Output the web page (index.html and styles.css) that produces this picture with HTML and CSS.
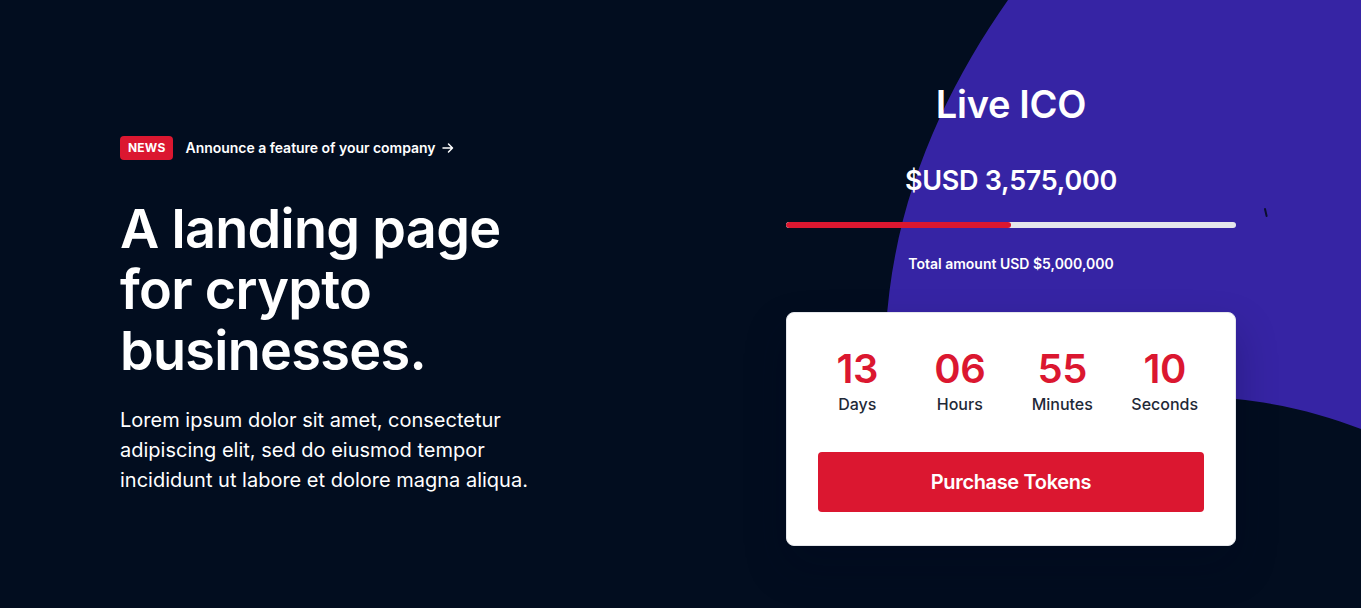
FILE: index.html
```html
<!DOCTYPE html>
<html lang="en">
<head>
<meta charset="utf-8">
<title>Crypto landing</title>
<link rel="stylesheet" href="styles.css">
</head>
<body>
<section class="hero">
  <svg class="blob" viewBox="0 0 476 608" width="476" height="608" aria-hidden="true">
    <path d="M123 0 C60 90 8 200 1 330 C10 400 200 385 351 399 C400 404 440 415 476 429 L476 0 Z" fill="#3624a4"/>
    <path d="M380 209 L381.6 216" stroke="#0b0f2e" stroke-width="2" stroke-linecap="round"/>
  </svg>
  <div class="container">
    <div class="intro">
      <a class="news" href="#">
        <span class="badge">NEWS</span>
        <span class="news-text">Announce a feature of your company</span>
        <svg class="arrow" viewBox="0 0 12 12" width="12" height="12" aria-hidden="true">
          <path d="M1 6 H10.5 M6.5 2 L10.5 6 L6.5 10" fill="none" stroke="#fff" stroke-width="1.5" stroke-linecap="round" stroke-linejoin="round"/>
        </svg>
      </a>
      <h1 class="title">A landing page for crypto businesses.</h1>
      <p class="lead">Lorem ipsum dolor sit amet, consectetur adipiscing elit, sed do eiusmod tempor incididunt ut labore et dolore magna aliqua.</p>
    </div>
    <div class="ico">
      <h2 class="ico-title">Live ICO</h2>
      <div class="raised">$USD 3,575,000</div>
      <div class="progress"><div class="progress-fill" style="width:50%"></div></div>
      <div class="total">Total amount USD $5,000,000</div>
      <div class="card">
        <div class="countdown">
          <div class="unit"><span class="num">13</span><span class="label">Days</span></div>
          <div class="unit"><span class="num">06</span><span class="label">Hours</span></div>
          <div class="unit"><span class="num">55</span><span class="label">Minutes</span></div>
          <div class="unit"><span class="num">10</span><span class="label">Seconds</span></div>
        </div>
        <a class="buy" href="#">Purchase Tokens</a>
      </div>
    </div>
  </div>
</section>
</body>
</html>
```

FILE: styles.css
```css
* { box-sizing: border-box; }
html, body { margin: 0; padding: 0; }
body {
  background: #020d1f;
  font-family: Inter, "Noto Sans", sans-serif;
  color: #fff;
  overflow: hidden;
}
.hero {
  position: relative;
  height: 608px;
  overflow: hidden;
}
.blob {
  position: absolute;
  top: 0;
  right: 0;
  display: block;
}
.container {
  position: relative;
  display: grid;
  grid-template-columns: 1fr 450px;
  align-items: start;
  padding: 0 125px 0 120px;
}
.intro {
  padding-top: 136px;
  max-width: 440px;
}
.news {
  display: flex;
  align-items: center;
  color: #fff;
  text-decoration: none;
}
.badge {
  display: inline-block;
  background: #db1730;
  color: #fff;
  font-size: 12px;
  font-weight: 700;
  line-height: 24px;
  height: 24px;
  padding: 0 8px;
  border-radius: 4px;
  letter-spacing: 0.2px;
}
.news-text {
  margin-left: 12px;
  font-size: 14px;
  font-weight: 600;
  line-height: 20px;
  letter-spacing: -0.03px;
}
.arrow { margin-left: 6px; }
.title {
  margin: 38px 0 0;
  font-size: 54px;
  font-weight: 600;
  line-height: 61px;
  letter-spacing: -0.7px;
}
.lead {
  margin: 24px 0 0;
  font-size: 20px;
  line-height: 30px;
  font-weight: 400;
  color: #fff;
}
.ico {
  padding-top: 83px;
  display: flex;
  flex-direction: column;
  align-items: center;
}
.ico-title {
  margin: 0;
  font-size: 38px;
  font-weight: 600;
  line-height: 42px;
  letter-spacing: -0.3px;
}
.raised {
  margin-top: 38px;
  font-size: 27px;
  font-weight: 600;
  line-height: 36px;
  letter-spacing: -0.3px;
}
.progress {
  margin-top: 23px;
  width: 100%;
  height: 6px;
  background: #e5e7eb;
  border-radius: 3px;
  overflow: hidden;
}
.progress-fill {
  height: 100%;
  background: #db1730;
  border-radius: 3px;
}
.total {
  margin-top: 26px;
  font-size: 14px;
  font-weight: 600;
  line-height: 20px;
}
.card {
  margin-top: 38px;
  width: 100%;
  background: #fff;
  border: 1px solid #e5e7eb;
  border-radius: 8px;
  padding: 34px 31px 33px;
  box-shadow: 0 20px 40px rgba(2, 6, 30, 0.25);
}
.countdown {
  display: grid;
  grid-template-columns: repeat(4, 1fr);
  margin: 0 -12px;
}
.unit {
  display: flex;
  flex-direction: column;
  align-items: center;
}
.num {
  color: #db1730;
  font-size: 40px;
  font-weight: 600;
  line-height: 44px;
  letter-spacing: -0.5px;
}
.label {
  color: #1f2937;
  font-size: 16px;
  font-weight: 500;
  line-height: 24px;
  margin-top: 1px;
}
.buy {
  display: flex;
  align-items: center;
  justify-content: center;
  margin-top: 36px;
  height: 60px;
  background: #db1730;
  color: #fff;
  text-decoration: none;
  font-size: 20px;
  font-weight: 600;
  letter-spacing: -0.35px;
  border-radius: 4px;
}
```
